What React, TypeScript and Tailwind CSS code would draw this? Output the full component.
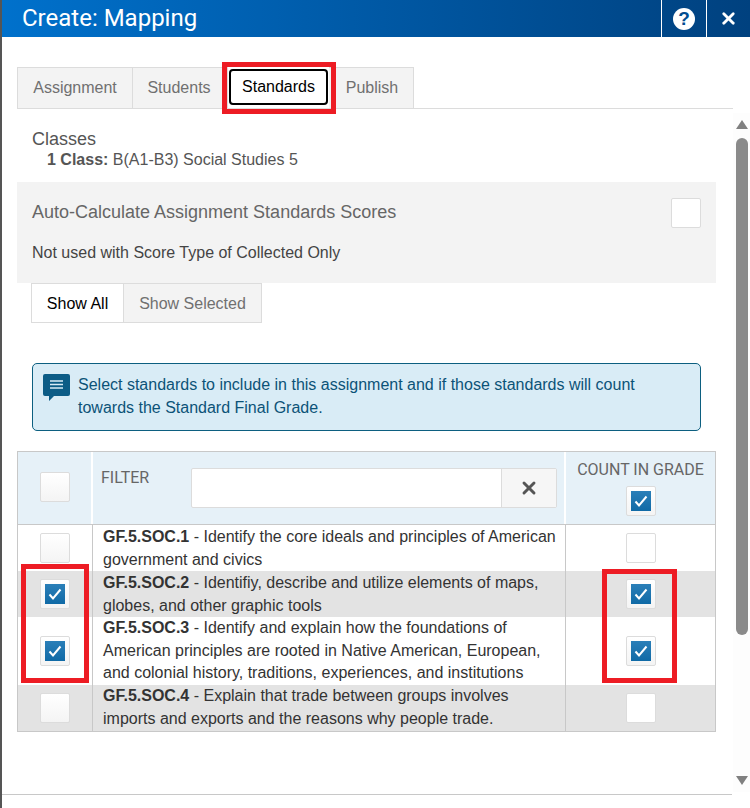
import React from "react";
import { X } from "lucide-react";

const arial = "font-['Liberation_Sans',Arial,sans-serif]";

function Box({ checked, plain }: { checked?: boolean; plain?: boolean }) {
  return (
    <span className={`flex h-[30px] w-[30px] items-center justify-center rounded-[2px] border border-[#dcdcdc] ${plain ? "bg-white" : "bg-gradient-to-b from-[#ffffff] to-[#f4f4f4]"}`}>
      {checked && (
        <span className="flex h-5 w-5 items-center justify-center bg-gradient-to-b from-[#2a7fb8] to-[#0f6aa6]">
          <svg width="16" height="16" viewBox="0 0 16 16" fill="none">
            <path d="M2.5 8.5 L6 12.5 L13.5 3.5" stroke="#fff" strokeWidth="2" />
          </svg>
        </span>
      )}
    </span>
  );
}

const rows = [
  {
    code: "GF.5.SOC.1",
    text: (
      <>
        {" "}- Identify the core ideals and principles of American
        <br />
        government and civics
      </>
    ),
    h: "h-[46px]",
    bg: "bg-white",
    pt: "pt-px",
    left: false,
    right: false,
  },
  {
    code: "GF.5.SOC.2",
    text: (
      <>
        {" "}- Identifiy, describe and utilize elements of maps,
        <br />
        globes, and other graphic tools
      </>
    ),
    h: "h-[46px]",
    bg: "bg-[#e3e3e3]",
    pt: "pt-px",
    left: true,
    right: true,
  },
  {
    code: "GF.5.SOC.3",
    text: (
      <>
        {" "}- Identify and explain how the foundations of
        <br />
        American principles are rooted in Native American, European,
        <br />
        and colonial history, traditions, experiences, and institutions
      </>
    ),
    h: "h-[68px]",
    bg: "bg-white",
    pt: "pt-0",
    left: true,
    right: true,
  },
  {
    code: "GF.5.SOC.4",
    text: (
      <>
        {" "}- Explain that trade between groups involves
        <br />
        imports and exports and the reasons why people trade.
      </>
    ),
    h: "h-[46px]",
    bg: "bg-[#e3e3e3]",
    pt: "pt-0",
    left: false,
    right: false,
  },
];

export default function App() {
  return (
    <div className={`${arial} relative flex h-[808px] w-[750px] flex-col overflow-hidden border-l-2 border-[#555] bg-white text-[16px] text-[#333]`}>
      <header className="flex h-[37px] shrink-0 items-stretch bg-gradient-to-r from-[#0071cc] to-[#00417f] text-white">
        <h1 className="flex-1 pl-5 font-['Roboto',sans-serif] text-[24px] leading-[36px]">Create: Mapping</h1>
        <div className="flex w-[45px] items-center justify-center border-l border-white">
          <span className="flex h-[22px] w-[22px] items-center justify-center rounded-full bg-white text-[19px] font-bold leading-none text-[#024d90]">?</span>
        </div>
        <div className="flex w-[44px] items-center justify-center border-l border-white">
          <X size={19} strokeWidth={3.5} />
        </div>
      </header>

      <div className="flex min-h-0 flex-1">
        <div className="w-[731px] shrink-0 pl-[15px]">
          <div className="mt-[30px] flex h-[42px] items-stretch border-b border-[#dcdcdc] text-[#707070]">
            <span className="flex w-[116px] items-center justify-center border border-b-0 border-[#dcdcdc] bg-[#f3f3f3]">Assignment</span>
            <span className="flex w-[95px] items-center justify-center border-y border-r border-b-0 border-[#dcdcdc] bg-[#f3f3f3] pr-[2px]">Students</span>
            <span className="flex w-[101px] items-center justify-start self-start pl-px">
              <span className="flex h-[36px] w-[99px] translate-y-[2px] items-center justify-center rounded-[4px] border-2 border-black bg-white text-black">Standards</span>
            </span>
            <span className="flex w-[85px] items-center justify-center border-y border-r border-b-0 border-[#dcdcdc] bg-[#f3f3f3] pl-[2px]">Publish</span>
          </div>

          <div className="pl-[15px] pt-[19px] text-[#555]">
            <div className="text-[18px] leading-[22px]">Classes</div>
            <div className="pl-[15px] text-[16px] leading-[19px]">
              <b className="font-bold">1 Class:</b> B(A1-B3) Social Studies 5
            </div>
          </div>

          <section className="mt-[13px] h-[101px] w-[699px] bg-[#f3f3f3] px-[15px] pt-[16px]">
            <div className="flex items-start justify-between">
              <span className="text-[18px] leading-[28px] text-[#666]">Auto-Calculate Assignment Standards Scores</span>
              <span className="h-[30px] w-[30px] rounded-[2px] border border-[#dcdcdc] bg-white" />
            </div>
            <p className="mt-[13px] leading-[24px] text-[#444]">Not used with Score Type of Collected Only</p>
          </section>

          <div className="ml-[14px] flex h-[40px] w-[231px] text-[16px]">
            <span className="flex w-[93px] items-center justify-center border border-[#dcdcdc] bg-white pt-px text-black">Show All</span>
            <span className="flex w-[138px] items-center justify-center border-y border-r border-[#dcdcdc] bg-[#f3f3f3] pt-px text-[#707070]">Show Selected</span>
          </div>

          <div className="ml-[15px] mt-[40px] flex h-[68px] w-[669px] gap-[8px] rounded-[5px] border border-[#0c5f80] bg-[#d9ecf6] pl-[10px] pt-[9px] text-[#0c5378]">
            <svg className="mt-[1px] shrink-0" width="27" height="28" viewBox="0 0 27 28">
              <path d="M2 0H25A2 2 0 0 1 27 2V20A2 2 0 0 1 25 22H11L6 27V22H2A2 2 0 0 1 0 20V2A2 2 0 0 1 2 0Z" fill="#0c5c86" />
              <path d="M7 7H20M7 10.5H20M7 14H20" stroke="#d9ecf6" strokeWidth="1.5" />
            </svg>
            <p className="whitespace-nowrap text-[16px] leading-[23px]">
              Select standards to include in this assignment and if those standards will count
              <br />
              towards the Standard Final Grade.
            </p>
          </div>

          <div className="mt-[20px] w-[699px] border-b border-l border-r border-[#c8c8c8]">
            <div className="flex h-[74px] border-y border-[#c8c8c8] bg-[#e6f1f8]">
              <div className="flex w-[75px] shrink-0 items-center justify-center border-r-2 border-white pb-[2px]">
                <Box />
              </div>
              <div className="flex flex-1 border-r-2 border-white pl-[8px] pt-[16px]">
                <span className="-mt-px w-[90px] font-['Roboto',sans-serif] text-[16px] leading-[22px] text-[#666]">FILTER</span>
                <div className="flex h-[40px] w-[366px] rounded-[2px] border border-[#dcdcdc] bg-white">
                  <span className="flex-1" />
                  <span className="flex w-[55px] items-center justify-center border-l border-[#dcdcdc] bg-[#f6f6f6] text-[#555]">
                    <X size={20} strokeWidth={3.5} />
                  </span>
                </div>
              </div>
              <div className="flex w-[149px] shrink-0 flex-col items-center pt-[8px]">
                <span className="whitespace-nowrap font-['Roboto',sans-serif] text-[16px] leading-[20px] text-[#666]">COUNT IN GRADE</span>
                <span className="mt-[6px]"><Box checked /></span>
              </div>
            </div>
            {rows.map((r) => (
              <div key={r.code} className={`flex ${r.h} ${r.bg}`}>
                <div className="flex w-[75px] shrink-0 items-center justify-center border-r border-[#c8c8c8]">
                  <Box checked={r.left} />
                </div>
                <div className={`flex-1 whitespace-nowrap border-r border-[#c8c8c8] pl-[10px] ${r.pt} text-[16px] leading-[22.7px]`}>
                  <b className="font-bold">{r.code}</b>
                  {r.text}
                </div>
                <div className="flex w-[149px] shrink-0 items-center justify-center">
                  <Box checked={r.right} plain={!r.right} />
                </div>
              </div>
            ))}
          </div>
        </div>

        <div className="mt-[76px] flex h-[679px] w-[17px] flex-col items-center justify-between bg-[#fdfdfd] pb-[7px] pt-[7px]">
          <span className="h-0 w-0 border-x-[6px] border-b-[9px] border-x-transparent border-b-[#808080]" />
          <span className="mb-[141px] mt-[9px] w-[12px] flex-1 rounded-[6px] bg-[#8a8a8a]" />
          <span className="h-0 w-0 border-x-[6px] border-t-[9px] border-x-transparent border-t-[#808080]" />
        </div>
      </div>

      <div className="absolute bottom-[13px] left-0 h-px w-[730px] bg-[#c8c8c8]" />

      {/* red annotation boxes */}
      <div className="pointer-events-none absolute left-[220px] top-[62px] h-[52px] w-[114px] border-[5px] border-[#ed1c24]" />
      <div className="pointer-events-none absolute left-[19px] top-[564px] h-[119px] w-[68px] border-[5px] border-[#ed1c24]" />
      <div className="pointer-events-none absolute left-[600px] top-[569px] h-[114px] w-[75px] border-[5px] border-[#ed1c24]" />
    </div>
  );
}
